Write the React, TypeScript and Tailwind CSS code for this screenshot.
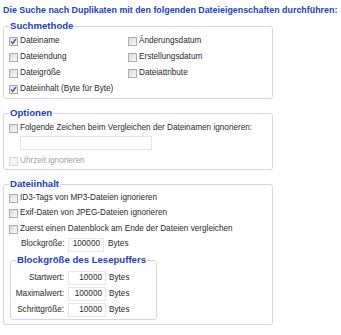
import React from "react";

const font = { fontFamily: '"Liberation Sans", Arial, sans-serif' };

function Box({ checked, disabled }: { checked?: boolean; disabled?: boolean }) {
  return (
    <span
      className={
        "relative flex h-[9px] w-[9px] shrink-0 items-center justify-center border " +
        (disabled
          ? "border-[#d6d6d6] bg-[#f4f4f4]"
          : "border-[#a9adb0] bg-gradient-to-br from-[#dcdcdc] to-[#f8f8f8]")
      }
    >
      {checked && (
        <svg width="7" height="7" viewBox="0 0 7 7" className="absolute left-[0px] top-[0px]">
          <path d="M1 3.5 L2.7 5.4 L6 1" stroke="#4a5a78" strokeWidth="1.3" fill="none" />
        </svg>
      )}
    </span>
  );
}

function Check({
  label,
  checked,
  disabled,
  h = "h-[16px]",
}: {
  label: string;
  checked?: boolean;
  disabled?: boolean;
  h?: string;
}) {
  return (
    <div className={"flex items-center gap-[2px] " + h}>
      <Box checked={checked} disabled={disabled} />
      <span className={disabled ? "text-[#a0a0a0]" : "text-[#2a2a2a]"}>{label}</span>
    </div>
  );
}

function NumField({ value, label }: { value: string; label?: string }) {
  return (
    <div className="flex h-[16px] items-center">
      {label !== undefined && <span className="w-[57px] pr-[4px] text-right">{label}</span>}
      <span className="flex h-[14px] w-[38px] items-center justify-end border border-[#e6e6e6] pr-[3px]">
        {value}
      </span>
      <span className="ml-[3px]">Bytes</span>
    </div>
  );
}

const legendCls = "flex h-[14px] items-center px-[1px] text-[9.6px] font-bold text-[#1c40c8]";

export default function App() {
  return (
    <div
      className="h-[335px] w-[341px] overflow-hidden bg-white pl-[3px] pt-[3px] text-[8.2px] leading-none text-[#2a2a2a]"
      style={font}
    >
      <div className="flex h-[14px] items-center whitespace-nowrap text-[8.9px] font-bold text-[#1c40c8]">
        Die Suche nach Duplikaten mit den folgenden Dateieigenschaften durchführen:
      </div>

      <fieldset className="mt-[2px] w-[270px] rounded-[3px] border border-[#d3d8dc] pb-[1px] pl-[5px]">
        <legend className={legendCls}>Suchmethode</legend>
        <div className="grid grid-cols-[119px_1fr]">
          <Check label="Dateiname" checked />
          <Check label="Änderungsdatum" />
          <Check label="Dateiendung" />
          <Check label="Erstellungsdatum" />
          <Check label="Dateigröße" />
          <Check label="Dateiattribute" />
          <Check label="Dateiinhalt (Byte für Byte)" checked />
        </div>
      </fieldset>

      <fieldset className="mt-[7px] w-[270px] rounded-[3px] border border-[#d3d8dc] pb-[0px] pl-[5px]">
        <legend className={legendCls}>Optionen</legend>
        <Check label="Folgende Zeichen beim Vergleichen der Dateinamen ignorieren:" />
        <div className="ml-[11px] h-[14px] w-[132px] border border-[#e3e3e3]" />
        <Check label="Uhrzeit ignorieren" disabled h="mt-[3px] h-[16px]" />
      </fieldset>

      <fieldset className="mt-[7px] w-[270px] rounded-[3px] border border-[#d3d8dc] pb-[4px] pl-[5px]">
        <legend className={legendCls}>Dateiinhalt</legend>
        <Check label="ID3-Tags von MP3-Dateien ignorieren" h="h-[15px]" />
        <Check label="Exif-Daten von JPEG-Dateien ignorieren" h="h-[15px]" />
        <Check label="Zuerst einen Datenblock am Ende der Dateien vergleichen" h="h-[16px]" />
        <div className="ml-[12px] flex h-[15px] items-center">
          <span className="w-[47px]">Blockgröße:</span>
          <span className="flex h-[14px] w-[36px] items-center justify-end border border-[#e6e6e6] pr-[3px]">
            100000
          </span>
          <span className="ml-[4px]">Bytes</span>
        </div>
        <fieldset className="ml-[1px] mt-[1px] w-[147px] rounded-[3px] border border-[#d3d8dc] pb-[1px] pt-[3px]">
          <legend className={legendCls + " ml-[5px]"}>Blockgröße des Lesepuffers</legend>
          <NumField label="Startwert:" value="10000" />
          <NumField label="Maximalwert:" value="100000" />
          <NumField label="Schrittgröße:" value="10000" />
        </fieldset>
      </fieldset>
    </div>
  );
}
